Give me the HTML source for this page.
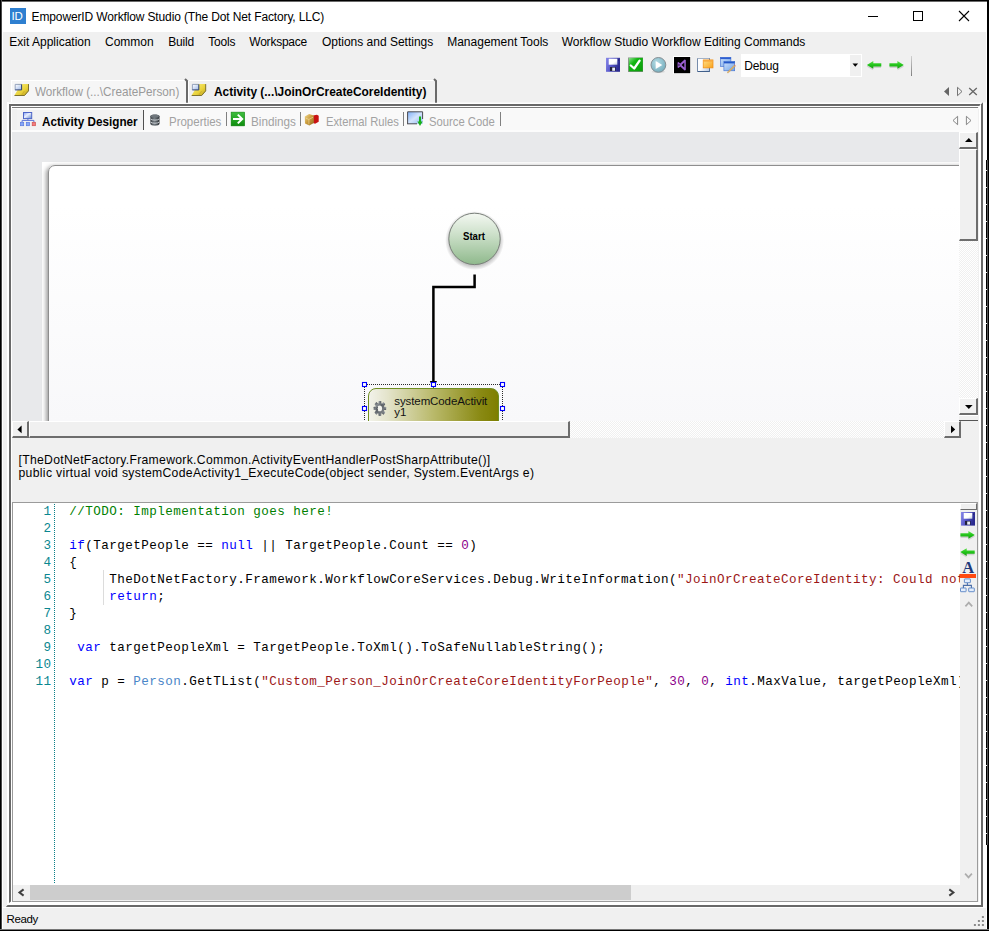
<!DOCTYPE html>
<html>
<head>
<meta charset="utf-8">
<title>EmpowerID Workflow Studio</title>
<style>
*{box-sizing:border-box;margin:0;padding:0}
html,body{width:989px;height:931px;overflow:hidden;background:#f0f0f0}
body{position:relative;font-family:"Liberation Sans",sans-serif;font-size:12px;color:#000}
.a{position:absolute}
.t{position:absolute;white-space:nowrap;line-height:1}
svg{position:absolute;overflow:visible}
/* classic 3d button */
.btn3d{position:absolute;background:#f0f0f0;border-top:1px solid #fff;border-left:1px solid #fff;border-right:2px solid #6d6d6d;border-bottom:2px solid #6d6d6d}
.dither{position:absolute;background:repeating-conic-gradient(#ffffff 0% 25%,#f0f0f0 0% 50%) 0 0/2px 2px}
.code{position:absolute;left:69.8px;font-family:"Liberation Mono",monospace;font-size:12.6px;letter-spacing:0.44px;padding-top:0.2px;line-height:17px;white-space:pre;color:#000;height:17px}
.ln{position:absolute;font-family:"Liberation Mono",monospace;font-size:12.6px;letter-spacing:0.44px;padding-top:0.2px;line-height:17px;white-space:pre;color:#0a8790;text-align:right;width:40px;left:11.5px;height:17px}
.kw{color:#0000ff}.cm{color:#008000}.st{color:#9c1616}.nm{color:#8b008b}.ty{color:#4a86c8}
.g{font-size:13px;color:#a2a2a2;transform:scaleX(0.9);transform-origin:0 0}
.lb{font-size:12.2px;color:#000}
</style>
</head>
<body>
<!-- ===== window frame ===== -->
<div class="a" style="left:2px;top:2px;width:985px;height:30px;background:#fff"></div>
<div class="a" style="left:2px;top:32px;width:1px;height:897px;background:#fff"></div>
<div class="a" style="left:986px;top:32px;width:1px;height:897px;background:#fff"></div>
<div class="a" style="left:2px;top:929px;width:985px;height:1px;background:#f8f8f8"></div>
<div class="a" style="left:0;top:0;width:989px;height:1px;background:#000"></div>
<div class="a" style="left:0;top:1px;width:989px;height:1px;background:#6a6a6a"></div>
<div class="a" style="left:0;top:0;width:2px;height:931px;background:linear-gradient(90deg,#000 50%,#4a4a4a 50%)"></div>
<div class="a" style="left:987px;top:0;width:2px;height:931px;background:#000"></div>
<div class="a" style="left:986px;top:160px;width:1px;height:685px;background:repeating-linear-gradient(#000 0px,#000 16px,#e8e8e8 16px,#e8e8e8 17px);background-position:0 -6px"></div>
<div class="a" style="left:987px;top:160px;width:1px;height:685px;background:#555"></div>
<div class="a" style="left:0;top:930px;width:989px;height:1px;background:#000"></div>
<div class="a" style="left:0;top:929px;width:989px;height:1px;background:#777"></div>

<!-- SECTION:TITLE -->
<div class="a" style="left:10px;top:8px;width:16px;height:16px;background:#2e7fd0"></div>
<div class="t" style="left:11.5px;top:10.5px;font-size:11.5px;color:#fff;letter-spacing:-0.2px">ID</div>
<div class="t" id="ttl" style="left:31.6px;top:10.5px;font-size:12px;letter-spacing:-0.135px">EmpowerID Workflow Studio (The Dot Net Factory, LLC)</div>
<svg style="left:860px;top:5px" width="120" height="22" viewBox="0 0 120 22">
 <path d="M8 11.5H18" stroke="#000" stroke-width="1" fill="none"/>
 <rect x="53.5" y="6.5" width="9" height="9" stroke="#000" stroke-width="1" fill="none"/>
 <path d="M99 6L109 16M109 6L99 16" stroke="#000" stroke-width="1.1" fill="none"/>
</svg>
<!-- SECTION:MENU -->
<div class="t m" id="m1" style="left:9.3px;top:36px">Exit Application</div>
<div class="t m" id="m2" style="left:105px;top:36px">Common</div>
<div class="t m" id="m3" style="left:168.3px;top:36px;letter-spacing:-0.2px">Build</div>
<div class="t m" id="m4" style="left:208.3px;top:36px;letter-spacing:-0.2px">Tools</div>
<div class="t m" id="m5" style="left:249.3px;top:36px;letter-spacing:-0.23px">Workspace</div>
<div class="t m" id="m6" style="left:321.9px;top:36px">Options and Settings</div>
<div class="t m" id="m7" style="left:447.2px;top:36px">Management Tools</div>
<div class="t m" id="m8" style="left:561.7px;top:36px">Workflow Studio Workflow Editing Commands</div>
<!-- SECTION:TOOLBAR -->
<svg width="0" height="0" style="left:0;top:0">
 <defs>
  <linearGradient id="gFl" x1="0" y1="0" x2="1" y2="0.3"><stop offset="0" stop-color="#8a8aea"/><stop offset="0.5" stop-color="#5656c8"/><stop offset="1" stop-color="#2c2c90"/></linearGradient>
  <linearGradient id="gFlW" x1="0" y1="0" x2="1" y2="1"><stop offset="0" stop-color="#fff"/><stop offset="0.6" stop-color="#fff"/><stop offset="1" stop-color="#c4cfe0"/></linearGradient>
  <linearGradient id="gChk" x1="0" y1="0" x2="1" y2="1"><stop offset="0" stop-color="#8fe08f"/><stop offset="0.35" stop-color="#12b612"/><stop offset="1" stop-color="#0a9c0a"/></linearGradient>
  <radialGradient id="gPlay" cx="0.4" cy="0.35" r="0.7"><stop offset="0" stop-color="#b4dbe4"/><stop offset="1" stop-color="#74adbd"/></radialGradient>
  <linearGradient id="gWin" x1="0" y1="0" x2="1" y2="1"><stop offset="0" stop-color="#fff"/><stop offset="0.55" stop-color="#fbfcfe"/><stop offset="1" stop-color="#b7c8e0"/></linearGradient>
  <linearGradient id="gOr" x1="0" y1="0" x2="1" y2="1"><stop offset="0" stop-color="#ffe08a"/><stop offset="1" stop-color="#f9a21a"/></linearGradient>
  <linearGradient id="gBW" x1="0" y1="0" x2="1" y2="1"><stop offset="0" stop-color="#cfe2fb"/><stop offset="1" stop-color="#6fa2e8"/></linearGradient>
  <linearGradient id="gArr" x1="0" y1="0" x2="0" y2="1"><stop offset="0" stop-color="#5fe04a"/><stop offset="0.5" stop-color="#22c41a"/><stop offset="1" stop-color="#17a010"/></linearGradient>
  <g id="icoSave">
   <rect x="0" y="0" width="14" height="14" fill="url(#gFl)"/>
   <rect x="2.7" y="0.9" width="8.6" height="6" fill="url(#gFlW)"/>
   <rect x="4" y="9.2" width="5.6" height="4" fill="#20203a"/>
   <rect x="6.2" y="9.8" width="2.8" height="3.2" fill="#e8ecf6"/>
   <rect x="12.2" y="1.6" width="1" height="1.2" fill="#1c1c60"/>
  </g>
  <g id="arrR">
   <path d="M0.3 4.8 H8.2 V2.6 L14.6 6.4 L8.2 10.2 V8 H0.3 Z" fill="#8a8a8a" opacity="0.3" transform="translate(0,1.5)"/>
   <path d="M0 4.7 H8 V2.4 L14.4 6.3 L8 10.1 V7.9 H0 Z" fill="url(#gArr)"/>
  </g>
 </defs>
</svg>
<svg style="left:606px;top:57px" width="14" height="16" viewBox="0 -0.8 14 16"><use href="#icoSave"/></svg>
<svg style="left:628px;top:57px" width="15" height="15" viewBox="0 -0.5 15 15">
 <rect x="0" y="0" width="15" height="14.5" fill="#8c8c8c"/>
 <rect x="0.8" y="0.3" width="14" height="13.6" fill="url(#gChk)"/>
 <path d="M2.8 8 L6.2 11 L11.6 3.2" stroke="#fff" stroke-width="2.3" fill="none" stroke-linecap="round" stroke-linejoin="round"/>
</svg>
<svg style="left:650px;top:57px" width="18" height="17" viewBox="-0.1 0 18 17">
 <ellipse cx="8.3" cy="14.8" rx="6.5" ry="1" fill="#c9c9c9" opacity="0.7"/>
 <circle cx="8.3" cy="7.9" r="7.4" fill="url(#gPlay)" stroke="#858d92" stroke-width="1"/>
 <path d="M5.6 3.9 L12.2 8 L5.6 11.9 Z" fill="#fff"/>
</svg>
<svg style="left:673px;top:56px" width="18" height="18" viewBox="0 0 18 18">
 <rect x="0" y="0" width="18" height="18" fill="#fff"/>
 <rect x="1" y="1" width="16.2" height="16.2" fill="#000"/>
 <path d="M11.6 3.4 L12.8 4 V14 L11.6 14.6 L7.2 10.6 L5.4 12 L4.6 11.6 V6.4 L5.4 6 L7.2 7.4 Z M11.3 6.6 L8.6 9 L11.3 11.4 Z M5.6 7.8 V10.2 L6.8 9 Z" fill="#9a5fd0" fill-rule="evenodd"/>
</svg>
<svg style="left:697px;top:58px" width="17" height="14.5" viewBox="0 0 17 14.5">
 <rect x="0.3" y="0.3" width="12.6" height="13.6" fill="#2d4f7f"/>
 <rect x="0.9" y="0.6" width="11.3" height="12.4" fill="url(#gWin)"/>
 <rect x="6.2" y="1.9" width="9.8" height="8" fill="url(#gOr)" stroke="#f08a10" stroke-width="0.7"/>
 <rect x="6.5" y="2.2" width="9.2" height="1.4" fill="#f8a53a"/>
</svg>
<svg style="left:720px;top:57px" width="17" height="16.5" viewBox="0 0 17 16.5">
 <rect x="0.3" y="0.3" width="10.6" height="9.2" fill="url(#gBW)" stroke="#3f6fd0" stroke-width="0.6"/>
 <rect x="0.3" y="0.3" width="10.6" height="1.8" fill="#2f5fd0"/>
 <rect x="3.9" y="4.6" width="10.8" height="9.2" fill="url(#gBW)" stroke="#3f6fd0" stroke-width="0.6"/>
 <rect x="3.9" y="4.6" width="10.8" height="1.8" fill="#2458c8"/>
 <path d="M14.2 8.3 L15.2 9.2 L8.6 15.6 L7.4 15.9 L7.8 14.7 Z" fill="#e8b86a" stroke="#b8883a" stroke-width="0.4"/>
 <path d="M14.4 7.8 L15.6 8.9" stroke="#e06a6a" stroke-width="1"/>
</svg>
<div class="a" style="left:741px;top:54px;width:121px;height:23px;background:#fff"></div>
<div class="a" style="left:850px;top:55px;width:11px;height:21px;background:#f0f0f0"></div>
<svg style="left:852px;top:63px" width="7" height="5" viewBox="-0.5 -0.5 7 5"><path d="M0 0H5.6L2.8 3.2Z" fill="#000"/></svg>
<div class="t" id="dbg" style="left:744.3px;top:59.5px;font-size:12px;letter-spacing:-0.2px">Debug</div>
<svg style="left:866px;top:58px" width="16" height="14" viewBox="-0.5 -0.6 16 14"><g transform="translate(14.8,0) scale(-1,1)"><use href="#arrR"/></g></svg>
<svg style="left:889px;top:58px" width="16" height="14" viewBox="-0.4 -0.6 16 14"><use href="#arrR"/></svg>
<div class="a" style="left:911px;top:56px;width:1px;height:20px;background:linear-gradient(#d0d0d0,#808080)"></div>
<!-- SECTION:OUTERTABS -->
<svg width="0" height="0" style="left:0;top:0"><defs>
 <linearGradient id="gYel" x1="0" y1="0" x2="1" y2="1"><stop offset="0" stop-color="#fbf18a"/><stop offset="0.6" stop-color="#e9d23a"/><stop offset="1" stop-color="#b89c1c"/></linearGradient>
 <linearGradient id="gScr" x1="0" y1="0" x2="1" y2="1"><stop offset="0" stop-color="#ffffff"/><stop offset="1" stop-color="#9db8e8"/></linearGradient>
 <g id="icoTab">
  <path d="M4.2 0.4 H14.6 V7.4 L10.6 12 H0.3 L3.4 7 Z" fill="url(#gYel)"/>
  <path d="M14.5 0.6 V7.4 L10.5 12 H0.5" fill="none" stroke="#7d7230" stroke-width="1"/>
  <path d="M10.4 7.6 L7.6 11.6" stroke="#c8a828" stroke-width="0.8"/>
  <rect x="1.5" y="1" width="6" height="5.3" fill="url(#gScr)"/>
  <path d="M1.2 6.6 V0.9 H7.6" stroke="#8a9ab8" stroke-width="0.9" fill="none"/>
  <path d="M7.6 0.9 V6.4 H1.2" stroke="#2a3f7a" stroke-width="1" fill="none"/>
 </g>
</defs></svg>
<div class="a" style="left:11px;top:80px;width:175px;height:22px;background:#f6f6f6"></div>
<div class="a" style="left:11px;top:80px;width:1px;height:22px;background:#fff"></div>
<div class="a" style="left:12px;top:80px;width:174px;height:1px;background:#fff"></div>
<svg style="left:14px;top:83px" width="16" height="14" viewBox="0 -0.5 16 14"><use href="#icoTab"/></svg>
<div class="t" id="ot1" style="left:35.2px;top:84.6px;font-size:13px;color:#9a9a9a;transform:scaleX(0.901);transform-origin:0 0">Workflow (...\CreatePerson)</div>
<svg style="left:184px;top:78px;z-index:2" width="6" height="25" viewBox="0 0 6 25"><path d="M1 1 L3 3 V24.8" stroke="#6a6a6a" stroke-width="2" fill="none"/><path d="M4.5 3 V24" stroke="#fff" stroke-width="1" fill="none"/></svg>
<div class="a" style="left:189px;top:80px;width:246px;height:1px;background:#fff"></div>
<svg style="left:191px;top:83px" width="17" height="14" viewBox="-0.2 -0.5 17 14"><use href="#icoTab"/></svg>
<div class="t" id="ot2" style="left:214.3px;top:84.6px;font-size:13px;font-weight:bold;color:#000;transform:scaleX(0.916);transform-origin:0 0">Activity (...\JoinOrCreateCoreIdentity)</div>
<svg style="left:433px;top:78px;z-index:2" width="6" height="25" viewBox="0 0 6 25"><path d="M1 1 L3 3 V24.8" stroke="#6a6a6a" stroke-width="2" fill="none"/></svg>
<svg style="left:943px;top:86px" width="36" height="11" viewBox="0 0 36 11">
 <path d="M6 1 V10 L1 5.5 Z" fill="#666"/>
 <path d="M14.5 1.3 V9.7 L19 5.5 Z" fill="none" stroke="#666" stroke-width="0.9"/>
 <path d="M26.2 2 L33.8 9 M33.8 2 L26.2 9" stroke="#666" stroke-width="1.3" fill="none"/>
</svg>
<!-- SECTION:PANEL -->
<div class="a" style="left:7px;top:102px;width:979px;height:806px;background:#fff"></div>
<div class="a" style="left:9px;top:102px;width:977px;height:1px;background:#f8f8f8"></div>
<svg style="left:0;top:0" width="989" height="931" viewBox="0 0 989 931">
 <path d="M9 104 H980.6 L979.4 106 H11 V901.4 L9 903 Z" fill="#696969"/>
 <path d="M983 102.3 V907 H5.9 L7.6 905 H981 V104.2 Z" fill="#696969"/>
</svg>
<div class="a" style="left:12px;top:107px;width:967px;height:795px;background:#f0f0f0"></div>
<div class="a" style="left:12px;top:107px;width:966px;height:1px;background:#7a7a7a"></div>
<div class="a" style="left:12px;top:108px;width:967px;height:1px;background:#fcfcfc"></div>
<!-- SECTION:INNERTABS -->
<div class="a" style="left:17px;top:109px;width:961px;height:21px;background:#f9f9f9"></div>
<div class="a" style="left:17px;top:110px;width:126px;height:20px;background:#f2f2f2"></div>
<div class="a" style="left:12px;top:130px;width:966px;height:2px;background:#fcfcfc"></div>
<svg style="left:20px;top:112px" width="17" height="14.5" viewBox="0 0 17 14.5">
 <defs><linearGradient id="gOrgT" x1="0" y1="0" x2="1" y2="1"><stop offset="0" stop-color="#7f9df0"/><stop offset="0.45" stop-color="#e8eeff"/><stop offset="1" stop-color="#5f86c8"/></linearGradient></defs>
 <path d="M7.9 6.8 V8.4 M2.1 10.4 V8.4 H13.9 V10.4" stroke="#5a72d6" stroke-width="1" fill="none"/>
 <rect x="3.5" y="0.5" width="8.2" height="6.1" fill="url(#gOrgT)" stroke="#4f66c8" stroke-width="1"/>
 <rect x="0.5" y="10.3" width="3.2" height="3.4" fill="#86a8f6" stroke="#5a78e0" stroke-width="0.7"/>
 <rect x="6.3" y="10.3" width="3.2" height="3.4" fill="#86a8f6" stroke="#5a78e0" stroke-width="0.7"/>
 <rect x="12.2" y="10.3" width="3.2" height="3.4" fill="#f47c7c" stroke="#d05050" stroke-width="0.7"/>
</svg>
<div class="t" id="it1" style="left:42.1px;top:114.6px;font-size:13px;font-weight:bold;transform:scaleX(0.9);transform-origin:0 0">Activity Designer</div>
<div class="a" style="left:143px;top:110px;width:1px;height:20px;background:#505050"></div>
<svg style="left:150px;top:113px" width="10" height="14" viewBox="0 -0.8 10 14">
 <defs><linearGradient id="gDb" x1="0" y1="0" x2="1" y2="0"><stop offset="0" stop-color="#3c4146"/><stop offset="0.45" stop-color="#727a80"/><stop offset="1" stop-color="#2e3236"/></linearGradient></defs>
 <path d="M0.3 2.4 C0.3 0 9.5 0 9.5 2.4 V10 C9.5 12.6 0.3 12.6 0.3 10 Z" fill="url(#gDb)"/>
 <ellipse cx="4.9" cy="2.3" rx="4.1" ry="1.5" fill="#6f767c"/>
 <path d="M0.6 5.2 C1.8 6.7 8 6.7 9.2 5.2" stroke="#d4d8dc" stroke-width="0.9" fill="none"/>
 <path d="M0.6 8.3 C1.8 9.8 8 9.8 9.2 8.3" stroke="#d4d8dc" stroke-width="0.9" fill="none"/>
</svg>
<div class="t g" id="it2" style="left:168.5px;top:114.6px;transform:scaleX(0.883)">Properties</div>
<div class="a" style="left:226px;top:112px;width:1px;height:14px;background:#808080"></div>
<svg style="left:230px;top:111px" width="16" height="16" viewBox="-0.4 -0.4 16 16">
 <defs><linearGradient id="gGb" x1="0" y1="0" x2="0" y2="1"><stop offset="0" stop-color="#3fbf3f"/><stop offset="1" stop-color="#0c8c0c"/></linearGradient></defs>
 <rect x="0" y="0" width="15" height="15.2" fill="#fbfbfb"/>
 <rect x="0.7" y="0.7" width="13.6" height="13.8" fill="url(#gGb)" stroke="#0a7a0a" stroke-width="0.5"/>
 <path d="M2.6 7.6 H11.6 M7.4 3.2 L11.8 7.6 L7.4 12" stroke="#fff" stroke-width="2" fill="none"/>
</svg>
<div class="t g" id="it3" style="left:251.2px;top:114.6px">Bindings</div>
<div class="a" style="left:300px;top:112px;width:1px;height:14px;background:#808080"></div>
<svg style="left:304px;top:113px" width="16" height="13" viewBox="-0.5 -0.8 16 13">
 <defs><linearGradient id="gGold" x1="0" y1="0" x2="1" y2="1"><stop offset="0" stop-color="#f0d890"/><stop offset="0.5" stop-color="#c99a3a"/><stop offset="1" stop-color="#8f6a20"/></linearGradient></defs>
 <path d="M8.6 1.8 L12.4 0.9 L14.2 2 V8 L10.6 10 L8.6 9.2 Z" fill="#c81212"/>
 <path d="M0.3 2.8 L4.6 0.3 L9.2 1.6 L9.3 9.2 L4.8 11.6 L0.5 9.8 Z" fill="url(#gGold)"/>
 <path d="M1.6 4.6 L4.4 5.6 V10.8 M4.4 5.6 L8.6 3.4" stroke="#f6e6b4" stroke-width="0.7" fill="none" opacity="0.8"/>
</svg>
<div class="t g" id="it4" style="left:326.2px;top:114.6px;transform:scaleX(0.861)">External Rules</div>
<div class="a" style="left:403px;top:112px;width:1px;height:14px;background:#808080"></div>
<svg style="left:406px;top:111px" width="18" height="16" viewBox="-1 0 18 16">
 <defs><linearGradient id="gSc" x1="0" y1="0" x2="1" y2="1"><stop offset="0" stop-color="#7fb0f8"/><stop offset="0.5" stop-color="#d4e4fc"/><stop offset="1" stop-color="#8cb8f4"/></linearGradient></defs>
 <rect x="0.6" y="0.8" width="15" height="12" fill="url(#gSc)"/>
 <path d="M0.6 13.2 V0.8 H15.6 V8" stroke="#4a4a50" stroke-width="1" fill="none"/>
 <path d="M0.6 12.8 H10" stroke="#4a4a50" stroke-width="1" fill="none"/>
 <path d="M13 5.6 V11.6" stroke="#18b018" stroke-width="2" fill="none"/><path d="M10.4 10.6 L13 15 L15.6 10.6 Z" fill="#18b018"/>
</svg>
<div class="t g" id="it5" style="left:429.3px;top:114.6px;transform:scaleX(0.867)">Source Code</div>
<div class="a" style="left:500px;top:112px;width:1px;height:14px;background:#808080"></div>
<svg style="left:952px;top:115px" width="20" height="11" viewBox="0 -0.5 20 11">
 <path d="M5.6 0.8 V9.2 L1 5 Z" fill="none" stroke="#7a7a7a" stroke-width="0.9"/>
 <path d="M14.4 0.8 V9.2 L19 5 Z" fill="none" stroke="#7a7a7a" stroke-width="0.9"/>
</svg>
<!-- SECTION:CANVAS -->
<div class="a" id="canvas" style="left:12px;top:132px;width:947px;height:289px;background:#e8e9eb;overflow:hidden">
 <div class="a" style="left:30px;top:30px;width:930px;height:270px;background:#fff"></div>
 <div class="a" style="left:36px;top:33px;width:1400px;height:600px;border:1.3px solid #8e8e8e;border-radius:7px;background:linear-gradient(#ffffff 0px,#ffffff 40px,#f8f8fa 256px,#f2f2f6 600px);box-shadow:-1.5px 1.5px 4px 0.3px rgba(60,60,60,0.5)"></div>
 <!-- start node -->
 <svg style="left:430px;top:76px" width="68" height="68" viewBox="0 0 68 68">
  <defs>
   <linearGradient id="gStart" x1="0" y1="0" x2="0" y2="1"><stop offset="0" stop-color="#f4f8f2"/><stop offset="0.45" stop-color="#c9dec6"/><stop offset="1" stop-color="#8fb98c"/></linearGradient>
   <radialGradient id="gSh" cx="0.5" cy="0.5" r="0.5"><stop offset="0.8" stop-color="#000" stop-opacity="0.28"/><stop offset="1" stop-color="#000" stop-opacity="0"/></radialGradient>
  </defs>
  <circle cx="32.6" cy="32.6" r="29.5" fill="url(#gSh)"/>
  <circle cx="32.5" cy="30.9" r="25.7" fill="url(#gStart)" stroke="#7a807a" stroke-width="1"/>
 </svg>
 <div class="t" id="start" style="left:451px;top:100px;font-size:10.2px;font-weight:bold;transform:scaleX(0.94);transform-origin:0 0">Start</div>
 <!-- connector -->
 <svg style="left:415px;top:140px" width="60" height="115" viewBox="0 0 60 115"><path d="M47.6 2.6 V14.9 H6.4 V111" stroke="#000" stroke-width="2.5" fill="none"/><path d="M2.8 109 H10 L6.4 116.2 Z" fill="#000"/></svg>
 <!-- activity -->
 <div class="a" style="left:356px;top:255.8px;width:131.3px;height:60px;border:1.3px solid #6f8f22;border-radius:8px;background:linear-gradient(90deg,#f2f2ea 0%,#e4e4cc 14%,#b9b96a 50%,#8a8a14 86%,#7e7e00 100%)"></div>
 <svg style="left:361px;top:268px" width="14" height="17" viewBox="0 -0.4 14 17">
  <defs><linearGradient id="gGear" x1="0" y1="0" x2="1" y2="1"><stop offset="0" stop-color="#a8acb0"/><stop offset="0.45" stop-color="#5c6268"/><stop offset="1" stop-color="#8a8e92"/></linearGradient></defs>
  <g transform="translate(6.9,8) scale(0.84,1)">
   <g fill="url(#gGear)">
    <rect x="-1.7" y="-7.5" width="3.4" height="15" rx="0.6"/>
    <rect x="-1.7" y="-7.5" width="3.4" height="15" rx="0.6" transform="rotate(45)"/>
    <rect x="-1.7" y="-7.5" width="3.4" height="15" rx="0.6" transform="rotate(90)"/>
    <rect x="-1.7" y="-7.5" width="3.4" height="15" rx="0.6" transform="rotate(135)"/>
    <circle r="5.4"/>
   </g>
   <circle r="2.9" cx="-0.3" fill="#f2f2ec"/>
   <path d="M-2.9 -1.6 A3.4 3.4 0 0 0 -2.6 2.2" stroke="#3e4248" stroke-width="1" fill="none"/>
  </g>
 </svg>
 <div class="t" id="act1" style="left:382.3px;top:263.6px;font-size:11.5px;line-height:11.4px;color:#111;letter-spacing:-0.1px">systemCodeActivit<br>y1</div>
 <!-- selection -->
 <svg style="left:349px;top:249px" width="146" height="45" viewBox="0 0 146 45">
  <path d="M6 3.5 H139 M3.5 6 V45 M141.5 6 V45" stroke="#2a2a2a" stroke-width="1" stroke-dasharray="1 1" fill="none" shape-rendering="crispEdges"/>
  <g fill="#fff" stroke="#0000ff" stroke-width="1.1">
   <rect x="1.5" y="1.5" width="4" height="4"/><rect x="70.5" y="1.5" width="4" height="4"/><rect x="139.5" y="1.5" width="4" height="4"/>
   <rect x="1.5" y="25.5" width="4" height="4"/><rect x="139.5" y="25.5" width="4" height="4"/>
  </g>
 </svg>
</div>
<!-- v scrollbar -->
<div class="dither" style="left:959px;top:132px;width:19px;height:289px"></div>
<div class="btn3d" style="left:959px;top:132px;width:19px;height:17px"></div>
<svg style="left:965px;top:137px" width="8" height="6" viewBox="0 -0.5 8 6"><path d="M0 4.6 H7.6 L3.8 0.4Z" fill="#000"/></svg>
<div class="btn3d" style="left:959px;top:149px;width:19px;height:91.5px"></div>
<div class="btn3d" style="left:959px;top:398px;width:19px;height:17px"></div>
<svg style="left:965px;top:404px" width="8" height="6" viewBox="0 -0.5 8 6"><path d="M0 0.4 H7.6 L3.8 4.6Z" fill="#000"/></svg>
<div class="a" style="left:959px;top:415px;width:19px;height:5px;background:#f0f0f0;border-top:1px solid #fff"></div>
<div class="a" style="left:959px;top:420px;width:19px;height:1px;background:#555"></div>
<!-- h scrollbar -->
<div class="dither" style="left:12px;top:421px;width:949px;height:17px"></div>
<div class="btn3d" style="left:12px;top:421px;width:17px;height:17px"></div>
<svg style="left:17px;top:425px" width="5" height="9" viewBox="0 -0.6 5 9"><path d="M4.6 0 V7.6 L0.4 3.8Z" fill="#000"/></svg>
<div class="btn3d" style="left:29px;top:421px;width:541px;height:17px"></div>
<div class="btn3d" style="left:944px;top:421px;width:17px;height:17px"></div>
<svg style="left:950px;top:425px" width="6" height="9" viewBox="-0.6 -0.6 6 9"><path d="M0.4 0 V7.6 L4.6 3.8Z" fill="#000"/></svg>
<div class="a" style="left:961px;top:421px;width:18px;height:17px;background:#f0f0f0"></div>
<!-- SECTION:LABEL -->
<div class="t lb" id="lb1" style="left:18.5px;top:454px;letter-spacing:0.304px">[TheDotNetFactory.Framework.Common.ActivityEventHandlerPostSharpAttribute()]</div>
<div class="t lb" id="lb2" style="left:18.5px;top:467.2px;letter-spacing:0.327px">public virtual void systemCodeActivity1_ExecuteCode(object sender, System.EventArgs e)</div>
<!-- SECTION:EDITOR -->
<div class="a" id="editor" style="left:12px;top:502px;width:966px;height:400px;background:#fff;border:1px solid #9b9b9b;overflow:hidden"></div>
<div class="a" id="codeclip" style="left:13px;top:503px;width:947px;height:382px;overflow:hidden">
<div class="ln" style="left:-1.5px;top:0.4px">1</div><div class="code" id="c1" style="left:56.3px;top:0.4px"><span class="cm">//TODO: Implementation goes here!</span></div>
<div class="ln" style="left:-1.5px;top:17.4px">2</div>
<div class="ln" style="left:-1.5px;top:34.4px">3</div><div class="code" id="c3" style="left:56.3px;top:34.4px"><span class="kw">if</span>(TargetPeople == <span class="kw">null</span> || TargetPeople.Count == <span class="nm">0</span>)</div>
<div class="ln" style="left:-1.5px;top:51.4px">4</div><div class="code" id="c4" style="left:56.3px;top:51.4px">{</div>
<div class="ln" style="left:-1.5px;top:68.4px">5</div><div class="code" id="c5" style="left:56.3px;top:68.4px">     TheDotNetFactory.Framework.WorkflowCoreServices.Debug.WriteInformation(<span class="st">"JoinOrCreateCoreIdentity: Could not find any person to join or create");</span></div>
<div class="ln" style="left:-1.5px;top:85.4px">6</div><div class="code" id="c6" style="left:56.3px;top:85.4px">     <span class="kw">return</span>;</div>
<div class="ln" style="left:-1.5px;top:102.4px">7</div><div class="code" id="c7" style="left:56.3px;top:102.4px">}</div>
<div class="ln" style="left:-1.5px;top:119.4px">8</div>
<div class="ln" style="left:-1.5px;top:136.4px">9</div><div class="code" id="c9" style="left:56.3px;top:136.4px"> <span class="kw">var</span> targetPeopleXml = TargetPeople.ToXml().ToSafeNullableString();</div>
<div class="ln" style="left:-1.5px;top:153.4px">10</div>
<div class="ln" style="left:-1.5px;top:170.4px">11</div><div class="code" id="c11" style="left:56.3px;top:170.4px"><span class="kw">var</span> p = <span class="ty">Person</span>.GetTList(<span class="st">"Custom_Person_JoinOrCreateCoreIdentityForPeople"</span>, <span class="nm">30</span>, <span class="nm">0</span>, <span class="kw">int</span>.MaxValue, targetPeopleXml);</div>
<svg style="left:41px;top:0" width="2" height="381" viewBox="0 0 2 381" shape-rendering="crispEdges"><path d="M0.5 1 V380" stroke="#0a8088" stroke-width="1" stroke-dasharray="1 1" fill="none"/></svg>
<div class="a" style="left:90px;top:67px;width:1px;height:35px;background:#dcdcdc"></div>
</div>
<div class="a" style="left:960px;top:503px;width:17px;height:398px;background:#f0f0f0"></div>
<div class="a" style="left:960px;top:503px;width:17px;height:6.5px;background:#f0f0f0;border-top:1px solid #fff;border-left:1px solid #fff;border-right:1.5px solid #6d6d6d;border-bottom:1.5px solid #6d6d6d"></div>
<svg style="left:961px;top:512px" width="14" height="14" viewBox="0 0 14 14.4" preserveAspectRatio="none"><use href="#icoSave"/></svg>
<svg style="left:960px;top:528px" width="16" height="14" viewBox="-0.4 -0.6 16 14"><use href="#arrR"/></svg>
<svg style="left:960px;top:545px" width="16" height="14" viewBox="-0.1 -0.8 16 14"><g transform="translate(14.6,0) scale(-1,1)"><use href="#arrR"/></g></svg>
<div class="t" id="bigA" style="left:962.2px;top:559.6px;font-family:'Liberation Serif',serif;font-weight:bold;font-size:16.5px;color:#1f3a7a">A</div>
<div class="a" style="left:960px;top:574px;width:16px;height:3.6px;background:#ff4a10"></div>
<svg style="left:960px;top:578px" width="15" height="15" viewBox="0 0 15 15">
 <path d="M7.4 4.8 V7.4 M3.4 10 V7.4 H11.4 V10" stroke="#4a6ea8" stroke-width="1.1" fill="none"/>
 <rect x="4.4" y="0.9" width="6" height="3.8" rx="0.4" fill="#e4eefc" stroke="#5a84c4" stroke-width="0.9"/>
 <rect x="0.5" y="10" width="5.6" height="3.7" rx="0.4" fill="#e4eefc" stroke="#5a84c4" stroke-width="0.9"/>
 <rect x="8.7" y="10" width="5.6" height="3.7" rx="0.4" fill="#e4eefc" stroke="#5a84c4" stroke-width="0.9"/>
</svg>
<svg style="left:964px;top:600px" width="10" height="8" viewBox="-0.5 -0.8 10 8"><path d="M0.9 5.6 L4.3 1.8 L7.7 5.6" stroke="#adadad" stroke-width="1.7" fill="none"/></svg>
<svg style="left:964px;top:872px" width="10" height="8" viewBox="-0.2 -0.6 10 8"><path d="M0.9 1 L4.3 4.8 L7.7 1" stroke="#adadad" stroke-width="1.7" fill="none"/></svg>
<div class="a" style="left:13px;top:885px;width:947px;height:16px;background:#f0f0f0"></div>
<div class="a" style="left:30px;top:885px;width:601px;height:14.8px;background:#cdcdcd"></div>
<svg style="left:17px;top:887px" width="8" height="9" viewBox="-0.3 -1.6 8 9"><path d="M6.3 0.8 L2.2 3.9 L6.3 7" stroke="#404040" stroke-width="2" fill="none"/></svg>
<svg style="left:947px;top:887px" width="9" height="9" viewBox="-0.6 -1.6 9 9"><path d="M1.7 0.8 L5.8 3.9 L1.7 7" stroke="#404040" stroke-width="2" fill="none"/></svg>
<!-- SECTION:STATUS -->
<div class="a" style="left:3px;top:907px;width:4px;height:1px;background:#fff"></div>
<div class="a" style="left:3px;top:908px;width:983px;height:21px;background:#f0f0f0"></div>
<div class="t" id="rdy" style="left:6.5px;top:913.7px;font-size:11.5px;letter-spacing:-0.4px">Ready</div>
<svg style="left:973px;top:915px" width="13" height="13" viewBox="-0.6 -0.6 13 13"><g fill="#8a8a8a"><rect x="8.3" y="0.4" width="2" height="2"/><rect x="4.3" y="4.4" width="2" height="2"/><rect x="8.3" y="4.4" width="2" height="2"/><rect x="0.3" y="8.4" width="2" height="2"/><rect x="4.3" y="8.4" width="2" height="2"/><rect x="8.3" y="8.4" width="2" height="2"/></g></svg>
</body>
</html>
